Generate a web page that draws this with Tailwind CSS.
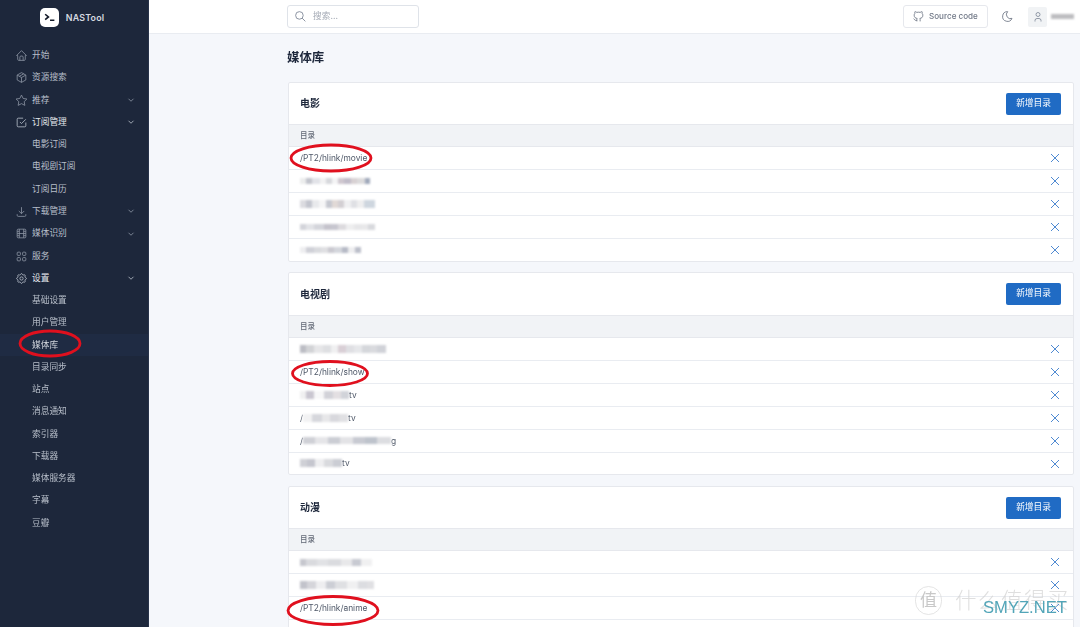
<!DOCTYPE html>
<html lang="zh-CN">
<head>
<meta charset="UTF-8" />
<title>NASTool</title>
<script src="https://cdn.jsdelivr.net/npm/@tailwindcss/browser@4"></script>
</head>
<body class="m-0 bg-[#f5f7fb] font-['Inter','Noto_Sans_CJK_SC',sans-serif]">
<!-- shared icons -->
<svg class="hidden">
  <symbol id="chev" viewBox="0 0 24 24"><path d="M6 9l6 6l6-6"/></symbol>
  <symbol id="x" viewBox="0 0 24 24"><path d="M18 6L6 18M6 6l12 12"/></symbol>
</svg>
<div class="relative flex w-[1080px] h-[627px] overflow-hidden blur-[0.3px]">
  <!-- sidebar -->
  <aside class="w-[149px] shrink-0 h-full bg-[#1d273b] border-r border-[#28334a]">
    <div class="h-[44.5px] pb-[10px] flex items-center justify-center gap-[7px] pr-[4px]">
      <div class="w-[19px] h-[19px] rounded-[5px] bg-white flex items-center justify-center">
        <svg class="w-[13px] h-[13px] fill-none stroke-[#111827] stroke-[3]" viewBox="0 0 24 24"><path d="M4 6l6 5l-6 5M13 17h8"/></svg>
      </div>
      <span class="text-[8.9px] font-semibold tracking-[0.2px] text-[#d5d9e0]">NASTool</span>
    </div>
    <nav class="text-[8.7px] text-[#b8bfca]">
      <a class="flex items-center h-[22.27px] pl-[15px]"><svg class="w-[13px] h-[13px] mr-[4px] fill-none stroke-[#8b94a3] stroke-[1.5]" viewBox="0 0 24 24"><path d="M5 12H3l9-9l9 9h-2M5 12v7a2 2 0 0 0 2 2h10a2 2 0 0 0 2-2v-7M9 21v-6a2 2 0 0 1 2-2h2a2 2 0 0 1 2 2v6"/></svg>开始</a>
      <a class="flex items-center h-[22.27px] pl-[15px]"><svg class="w-[13px] h-[13px] mr-[4px] fill-none stroke-[#8b94a3] stroke-[1.5]" viewBox="0 0 24 24"><path d="M12 3l8 4.5v9L12 21l-8-4.5v-9L12 3M12 12l8-4.5M12 12v9M12 12L4 7.5M16 5.25l-8 4.5"/></svg>资源搜索</a>
      <a class="flex items-center h-[22.27px] pl-[15px]"><svg class="w-[13px] h-[13px] mr-[4px] fill-none stroke-[#8b94a3] stroke-[1.5]" viewBox="0 0 24 24"><path d="M12 17.75l-6.172 3.245l1.179-6.873l-5-4.867l6.9-1l3.086-6.253l3.086 6.253l6.9 1l-5 4.867l1.179 6.873z"/></svg>推荐<svg class="ml-auto mr-[12px] w-[10px] h-[10px] fill-none stroke-[#8b94a3] stroke-2"><use href="#chev"/></svg></a>
      <a class="flex items-center h-[22.27px] pl-[15px] text-[#e6e9ee]"><svg class="w-[13px] h-[13px] mr-[4px] fill-none stroke-[#b8bfca] stroke-[1.5]" viewBox="0 0 24 24"><path d="M9 11l3 3l8-8M20 12v6a2 2 0 0 1-2 2H6a2 2 0 0 1-2-2V6a2 2 0 0 1 2-2h9"/></svg>订阅管理<svg class="ml-auto mr-[12px] w-[10px] h-[10px] fill-none stroke-[#b8bfca] stroke-2"><use href="#chev"/></svg></a>
      <a class="flex items-center h-[22.27px] pl-[32px]">电影订阅</a>
      <a class="flex items-center h-[22.27px] pl-[32px]">电视剧订阅</a>
      <a class="flex items-center h-[22.27px] pl-[32px]">订阅日历</a>
      <a class="flex items-center h-[22.27px] pl-[15px]"><svg class="w-[13px] h-[13px] mr-[4px] fill-none stroke-[#8b94a3] stroke-[1.5]" viewBox="0 0 24 24"><path d="M4 17v2a2 2 0 0 0 2 2h12a2 2 0 0 0 2-2v-2M7 11l5 5l5-5M12 4v12"/></svg>下载管理<svg class="ml-auto mr-[12px] w-[10px] h-[10px] fill-none stroke-[#8b94a3] stroke-2"><use href="#chev"/></svg></a>
      <a class="flex items-center h-[22.27px] pl-[15px]"><svg class="w-[13px] h-[13px] mr-[4px] fill-none stroke-[#8b94a3] stroke-[1.5]" viewBox="0 0 24 24"><path d="M6 4h12a2 2 0 0 1 2 2v12a2 2 0 0 1-2 2H6a2 2 0 0 1-2-2V6a2 2 0 0 1 2-2zM8 4v16M16 4v16M4 8h4M4 16h4M4 12h16M16 8h4M16 16h4"/></svg>媒体识别<svg class="ml-auto mr-[12px] w-[10px] h-[10px] fill-none stroke-[#8b94a3] stroke-2"><use href="#chev"/></svg></a>
      <a class="flex items-center h-[22.27px] pl-[15px]"><svg class="w-[13px] h-[13px] mr-[4px] fill-none stroke-[#8b94a3] stroke-[1.5]" viewBox="0 0 24 24"><rect x="4" y="4" width="6" height="6" rx="1.5"/><rect x="14" y="4" width="6" height="6" rx="1.5"/><rect x="4" y="14" width="6" height="6" rx="1.5"/><rect x="14" y="14" width="6" height="6" rx="1.5"/></svg>服务</a>
      <a class="flex items-center h-[22.27px] pl-[15px] text-[#e6e9ee]"><svg class="w-[13px] h-[13px] mr-[4px] fill-none stroke-[#b8bfca] stroke-[1.5]" viewBox="0 0 24 24"><path d="M10.325 4.317c.426-1.756 2.924-1.756 3.35 0a1.724 1.724 0 0 0 2.573 1.066c1.543-.94 3.31.826 2.37 2.37a1.724 1.724 0 0 0 1.065 2.572c1.756.426 1.756 2.924 0 3.35a1.724 1.724 0 0 0-1.066 2.573c.94 1.543-.826 3.31-2.37 2.37a1.724 1.724 0 0 0-2.572 1.065c-.426 1.756-2.924 1.756-3.35 0a1.724 1.724 0 0 0-2.573-1.066c-1.543.94-3.31-.826-2.37-2.37a1.724 1.724 0 0 0-1.065-2.572c-1.756-.426-1.756-2.924 0-3.35a1.724 1.724 0 0 0 1.066-2.573c-.94-1.543.826-3.31 2.37-2.37c1 .608 2.296.07 2.572-1.065z"/><circle cx="12" cy="12" r="3"/></svg>设置<svg class="ml-auto mr-[12px] w-[10px] h-[10px] fill-none stroke-[#b8bfca] stroke-2"><use href="#chev"/></svg></a>
      <a class="flex items-center h-[22.27px] pl-[32px]">基础设置</a>
      <a class="flex items-center h-[22.27px] pl-[32px]">用户管理</a>
      <a class="flex items-center h-[22.27px] pl-[32px] bg-[#1f2b43] text-[#d5d9e0]">媒体库</a>
      <a class="flex items-center h-[22.27px] pl-[32px]">目录同步</a>
      <a class="flex items-center h-[22.27px] pl-[32px]">站点</a>
      <a class="flex items-center h-[22.27px] pl-[32px]">消息通知</a>
      <a class="flex items-center h-[22.27px] pl-[32px]">索引器</a>
      <a class="flex items-center h-[22.27px] pl-[32px]">下载器</a>
      <a class="flex items-center h-[22.27px] pl-[32px]">媒体服务器</a>
      <a class="flex items-center h-[22.27px] pl-[32px]">字幕</a>
      <a class="flex items-center h-[22.27px] pl-[32px]">豆瓣</a>
    </nav>
  </aside>

  <div class="flex-1 min-w-0">
    <!-- top bar -->
    <header class="h-[34px] bg-white border-b border-[#e9ecf1] flex items-center pl-[138px] pr-[6px]">
      <div class="w-[132px] h-[23px] flex items-center border border-[#dfe3e9] rounded-[3px] pl-[6px]">
        <svg class="w-[13px] h-[13px] mr-[6px] fill-none stroke-[#7b8494] stroke-[1.6]" viewBox="0 0 24 24"><circle cx="10" cy="10" r="7"/><path d="M21 21l-6-6"/></svg>
        <span class="text-[8.7px] text-[#a3a9b4]">搜索...</span>
      </div>
      <div class="ml-auto w-[85px] h-[23px] flex items-center border border-[#e6e8ed] rounded-[3px] pl-[8px] text-[8.1px] font-medium text-[#6e7685]">
        <svg class="w-[13px] h-[13px] mr-[4px] fill-none stroke-[#6e7685] stroke-[1.6]" viewBox="0 0 24 24"><path d="M9 19c-4.3 1.4-4.3-2.5-6-3m12 5v-3.5c0-1 .1-1.4-.5-2c2.8-.3 5.5-1.4 5.5-6a4.6 4.6 0 0 0-1.3-3.2a4.2 4.2 0 0 0-.1-3.2s-1.1-.3-3.5 1.3a12.3 12.3 0 0 0-6.2 0C6.5 2.8 5.4 3.1 5.4 3.1a4.2 4.2 0 0 0-.1 3.2A4.6 4.6 0 0 0 4 9.5c0 4.6 2.7 5.7 5.5 6c-.6.6-.6 1.2-.5 2V21"/></svg>
        Source code
      </div>
      <svg class="ml-[13px] w-[13px] h-[13px] fill-none stroke-[#6e7685] stroke-[1.6]" viewBox="0 0 24 24"><path d="M12 3c.132 0 .263 0 .393 0a7.5 7.5 0 0 0 7.92 12.446a9 9 0 1 1-8.313-12.454z"/></svg>
      <div class="ml-[14px] w-[19px] h-[20px] rounded-[2px] bg-[#f1f3f5] flex items-center justify-center">
        <svg class="w-[12px] h-[12px] fill-none stroke-[#7b8494] stroke-[1.6]" viewBox="0 0 24 24"><circle cx="12" cy="7" r="4"/><path d="M6 21v-2a4 4 0 0 1 4-4h4a4 4 0 0 1 4 4v2"/></svg>
      </div>
      <div class="ml-[4px] w-[23px] h-[5px] bg-[#bdbdc0] blur-[1px]"></div>
    </header>

    <main class="pl-[139px] pr-[6px]">
      <h1 class="h-[48px] flex items-center -ml-[1px] text-[12.4px] font-semibold text-[#1d273b]">媒体库</h1>

      <!-- movie -->
      <section class="bg-white border border-[#e6e8ed] rounded-[2px] mb-[10px]">
        <div class="h-[41px] flex items-center justify-between pl-[11px] pr-[12px]">
          <h2 class="text-[10px] font-semibold text-[#1d273b]">电影</h2>
          <button class="w-[55px] h-[22px] rounded-[2px] bg-[#206bc4] text-white text-[8.7px]">新增目录</button>
        </div>
        <div class="h-[23px] flex items-center pl-[11px] bg-[#f1f3f6] border-y border-[#e6e8ed] text-[7.5px] font-medium text-[#626976]">目录</div>
        <div class="h-[23px] flex items-center justify-between pl-[11px] pr-[10px] border-b border-[#e9ecf1] text-[8.4px] text-[#4f5868]"><span>/PT2/hlink/movie</span><svg class="w-[16px] h-[16px] fill-none stroke-[#4f8ad2] stroke-[1.5]"><use href="#x"/></svg></div>
        <div class="h-[23px] flex items-center justify-between pl-[11px] pr-[10px] border-b border-[#e9ecf1]"><span class="flex h-[6px] blur-[0.8px]"><i class="w-[6px] bg-[#eceded]"></i><i class="w-[6px] bg-[#c2c4cc]"></i><i class="w-[8px] bg-[#e2e3e8]"></i><i class="w-[6px] bg-[#f2f2f3]"></i><i class="w-[6px] bg-[#d7d8dc]"></i><i class="w-[6px] bg-[#f4f4f5]"></i><i class="w-[6px] bg-[#cfc7cf]"></i><i class="w-[7px] bg-[#c1bcc9]"></i><i class="w-[6px] bg-[#d8d1d3]"></i><i class="w-[8px] bg-[#dcdbdc]"></i><i class="w-[5px] bg-[#a0a9bb]"></i></span><svg class="w-[16px] h-[16px] fill-none stroke-[#4f8ad2] stroke-[1.5]"><use href="#x"/></svg></div>
        <div class="h-[23px] flex items-center justify-between pl-[11px] pr-[10px] border-b border-[#e9ecf1]"><span class="flex h-[8px] blur-[0.8px]"><i class="w-[6px] bg-[#dbdbe0]"></i><i class="w-[6px] bg-[#c3c5ce]"></i><i class="w-[7px] bg-[#e8e9ec]"></i><i class="w-[7px] bg-[#f5f5f6]"></i><i class="w-[6px] bg-[#c6c8d0]"></i><i class="w-[6px] bg-[#e1d9d6]"></i><i class="w-[6px] bg-[#d3cfd3]"></i><i class="w-[7px] bg-[#f0f0f2]"></i><i class="w-[6px] bg-[#dfe0e4]"></i><i class="w-[7px] bg-[#eeeeef]"></i><i class="w-[11px] bg-[#ced6df]"></i></span><svg class="w-[16px] h-[16px] fill-none stroke-[#4f8ad2] stroke-[1.5]"><use href="#x"/></svg></div>
        <div class="h-[23px] flex items-center justify-between pl-[11px] pr-[10px] border-b border-[#e9ecf1]"><span class="flex h-[6px] blur-[0.8px]"><i class="w-[6px] bg-[#d3d4da]"></i><i class="w-[8px] bg-[#e2e3e7]"></i><i class="w-[10px] bg-[#d4d5db]"></i><i class="w-[7px] bg-[#c5c3cc]"></i><i class="w-[7px] bg-[#c7c6cf]"></i><i class="w-[8px] bg-[#dcdade]"></i><i class="w-[8px] bg-[#eeeeef]"></i><i class="w-[7px] bg-[#e6e6e8]"></i><i class="w-[7px] bg-[#e8e8ea]"></i><i class="w-[7px] bg-[#d8d9dd]"></i></span><svg class="w-[16px] h-[16px] fill-none stroke-[#4f8ad2] stroke-[1.5]"><use href="#x"/></svg></div>
        <div class="h-[22px] flex items-center justify-between pl-[11px] pr-[10px]"><span class="flex h-[6px] blur-[0.8px]"><i class="w-[6px] bg-[#eeeef0]"></i><i class="w-[8px] bg-[#cfd0d7]"></i><i class="w-[7px] bg-[#d9dade]"></i><i class="w-[7px] bg-[#dfdfe2]"></i><i class="w-[6px] bg-[#cac9d0]"></i><i class="w-[8px] bg-[#d4d6dc]"></i><i class="w-[6px] bg-[#b6bac6]"></i><i class="w-[7px] bg-[#eeeef0]"></i><i class="w-[6px] bg-[#bcbfca]"></i></span><svg class="w-[16px] h-[16px] fill-none stroke-[#4f8ad2] stroke-[1.5]"><use href="#x"/></svg></div>
      </section>

      <!-- tv -->
      <section class="bg-white border border-[#e6e8ed] rounded-[2px] mb-[11px]">
        <div class="h-[42px] flex items-center justify-between pl-[11px] pr-[12px]">
          <h2 class="text-[10px] font-semibold text-[#1d273b]">电视剧</h2>
          <button class="w-[55px] h-[22px] rounded-[2px] bg-[#206bc4] text-white text-[8.7px]">新增目录</button>
        </div>
        <div class="h-[23px] flex items-center pl-[11px] bg-[#f1f3f6] border-y border-[#e6e8ed] text-[7.5px] font-medium text-[#626976]">目录</div>
        <div class="h-[23px] flex items-center justify-between pl-[11px] pr-[10px] border-b border-[#e9ecf1]"><span class="flex h-[8px] blur-[0.8px]"><i class="w-[6px] bg-[#bcbdc4]"></i><i class="w-[8px] bg-[#d2d3d6]"></i><i class="w-[9px] bg-[#e6e6e8]"></i><i class="w-[8px] bg-[#dedfe2]"></i><i class="w-[7px] bg-[#f0f0f1]"></i><i class="w-[8px] bg-[#d9cfd6]"></i><i class="w-[8px] bg-[#dfdfe3]"></i><i class="w-[8px] bg-[#e6e7ea]"></i><i class="w-[8px] bg-[#d5d7db]"></i><i class="w-[7px] bg-[#d9dade]"></i><i class="w-[9px] bg-[#d0d2d8]"></i></span><svg class="w-[16px] h-[16px] fill-none stroke-[#4f8ad2] stroke-[1.5]"><use href="#x"/></svg></div>
        <div class="h-[23px] flex items-center justify-between pl-[11px] pr-[10px] border-b border-[#e9ecf1] text-[8.4px] text-[#4f5868]"><span>/PT2/hlink/show</span><svg class="w-[16px] h-[16px] fill-none stroke-[#4f8ad2] stroke-[1.5]"><use href="#x"/></svg></div>
        <div class="h-[23px] flex items-center justify-between pl-[11px] pr-[10px] border-b border-[#e9ecf1] text-[8.4px] text-[#4f5868]"><span class="flex items-center"><span class="flex h-[8px] blur-[0.8px]"><i class="w-[6px] bg-[#f0f0f1]"></i><i class="w-[8px] bg-[#c9c6d0]"></i><i class="w-[10px] bg-[#f7f7f8]"></i><i class="w-[9px] bg-[#d2d2d8]"></i><i class="w-[8px] bg-[#e3dfe2]"></i><i class="w-[8px] bg-[#d1d3d9]"></i></span>tv</span><svg class="w-[16px] h-[16px] fill-none stroke-[#4f8ad2] stroke-[1.5]"><use href="#x"/></svg></div>
        <div class="h-[23px] flex items-center justify-between pl-[11px] pr-[10px] border-b border-[#e9ecf1] text-[8.4px] text-[#4f5868]"><span class="flex items-center">/<span class="flex h-[8px] blur-[0.8px]"><i class="w-[9px] bg-[#f2f2f3]"></i><i class="w-[10px] bg-[#d6d7dc]"></i><i class="w-[8px] bg-[#e7e7e9]"></i><i class="w-[9px] bg-[#d8d8dd]"></i><i class="w-[9px] bg-[#e0e0e3]"></i></span>tv</span><svg class="w-[16px] h-[16px] fill-none stroke-[#4f8ad2] stroke-[1.5]"><use href="#x"/></svg></div>
        <div class="h-[23px] flex items-center justify-between pl-[11px] pr-[10px] border-b border-[#e9ecf1] text-[8.4px] text-[#4f5868]"><span class="flex items-center">/<span class="flex h-[7px] blur-[0.8px]"><i class="w-[12px] bg-[#cfd0d6]"></i><i class="w-[13px] bg-[#e5e5e8]"></i><i class="w-[12px] bg-[#cbcdd4]"></i><i class="w-[13px] bg-[#e3e3e6]"></i><i class="w-[12px] bg-[#c8cad2]"></i><i class="w-[12px] bg-[#bec3cc]"></i><i class="w-[14px] bg-[#dcdde1]"></i></span>g</span><svg class="w-[16px] h-[16px] fill-none stroke-[#4f8ad2] stroke-[1.5]"><use href="#x"/></svg></div>
        <div class="h-[21px] flex items-center justify-between pl-[11px] pr-[10px] text-[8.4px] text-[#4f5868]"><span class="flex items-center"><span class="flex h-[8px] blur-[0.8px]"><i class="w-[7px] bg-[#cfd0d6]"></i><i class="w-[8px] bg-[#c5c6ce]"></i><i class="w-[9px] bg-[#eeeef0]"></i><i class="w-[9px] bg-[#d9dade]"></i><i class="w-[9px] bg-[#cbcdd4]"></i></span>tv</span><svg class="w-[16px] h-[16px] fill-none stroke-[#4f8ad2] stroke-[1.5]"><use href="#x"/></svg></div>
      </section>

      <!-- anime -->
      <section class="bg-white border border-[#e6e8ed] rounded-[2px]">
        <div class="h-[41px] flex items-center justify-between pl-[11px] pr-[12px]">
          <h2 class="text-[10px] font-semibold text-[#1d273b]">动漫</h2>
          <button class="w-[55px] h-[22px] rounded-[2px] bg-[#206bc4] text-white text-[8.7px]">新增目录</button>
        </div>
        <div class="h-[23px] flex items-center pl-[11px] bg-[#f1f3f6] border-y border-[#e6e8ed] text-[7.5px] font-medium text-[#626976]">目录</div>
        <div class="h-[23px] flex items-center justify-between pl-[11px] pr-[10px] border-b border-[#e9ecf1]"><span class="flex h-[7px] blur-[0.8px]"><i class="w-[6px] bg-[#c6c7ce]"></i><i class="w-[11px] bg-[#d9dade]"></i><i class="w-[11px] bg-[#e1e2e5]"></i><i class="w-[13px] bg-[#dadbdf]"></i><i class="w-[11px] bg-[#e8e8ea]"></i><i class="w-[9px] bg-[#c8cad2]"></i><i class="w-[11px] bg-[#f0f0f1]"></i></span><svg class="w-[16px] h-[16px] fill-none stroke-[#4f8ad2] stroke-[1.5]"><use href="#x"/></svg></div>
        <div class="h-[23px] flex items-center justify-between pl-[11px] pr-[10px] border-b border-[#e9ecf1]"><span class="flex h-[8px] blur-[0.8px]"><i class="w-[7px] bg-[#c2c3cb]"></i><i class="w-[9px] bg-[#d5d5da]"></i><i class="w-[10px] bg-[#eeeef0]"></i><i class="w-[9px] bg-[#ccced5]"></i><i class="w-[12px] bg-[#dfe0e3]"></i><i class="w-[11px] bg-[#f0f0f1]"></i><i class="w-[9px] bg-[#dcdde1]"></i><i class="w-[7px] bg-[#e0e0e3]"></i></span><svg class="w-[16px] h-[16px] fill-none stroke-[#4f8ad2] stroke-[1.5]"><use href="#x"/></svg></div>
        <div class="h-[23px] flex items-center justify-between pl-[11px] pr-[10px] border-b border-[#e9ecf1] text-[8.4px] text-[#4f5868]"><span>/PT2/hlink/anime</span><svg class="w-[16px] h-[16px] fill-none stroke-[#4f8ad2] stroke-[1.5]"><use href="#x"/></svg></div>
        <div class="h-[23px] border-b border-[#e9ecf1]"></div>
      </section>
    </main>
  </div>

  <!-- red annotation rings -->
  <svg class="absolute left-0 top-0 w-[1080px] h-[627px] pointer-events-none fill-none stroke-[#e0101e] stroke-[2.8]" viewBox="0 0 1080 627">
    <ellipse cx="331" cy="158" rx="40" ry="13"/>
    <ellipse cx="330" cy="373.5" rx="37.5" ry="12"/>
    <ellipse cx="333" cy="610.5" rx="45" ry="14"/>
    <ellipse cx="50" cy="343.5" rx="30" ry="12.5"/>
  </svg>

  <!-- watermark -->
  <div class="absolute left-[915px] top-[586px] w-[27px] h-[29px] rounded-full border border-[#d8d8d8]/70 flex items-center justify-center text-[17px] text-[#c8c8c8]">值</div>
  <div class="absolute left-[955px] top-[585px] text-[21.5px] leading-[30px] tracking-[1.5px] font-light text-[#d2d2d2]/70 whitespace-nowrap">什么值得买</div>
  <div class="absolute left-[983px] top-[598px] text-[16.6px] leading-[20px] text-[#52a5b8] whitespace-nowrap font-['Liberation_Sans',sans-serif]">SMYZ.NET</div>
</div>
</body>
</html>
